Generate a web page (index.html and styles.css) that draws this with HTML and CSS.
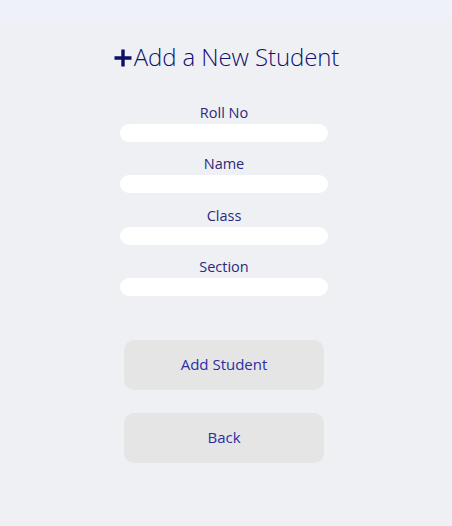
FILE: index.html
```html
<!DOCTYPE html>
<html lang="en">
<head>
<meta charset="utf-8">
<title>Add a New Student</title>
<link rel="stylesheet" href="styles.css">
</head>
<body>
<header class="topbar"></header>
<main class="page">
  <h1 class="title">
    <svg class="plus" width="18" height="18" viewBox="0 0 18 18" aria-hidden="true">
      <path d="M9 0.5V17.5M0.5 9H17.5" stroke="#0d0d66" stroke-width="3.4" fill="none"/>
    </svg>
    <span>Add a New Student</span>
  </h1>
  <form class="form">
    <div class="field">
      <label class="label" for="roll">Roll No</label>
      <input class="input" id="roll" type="text">
    </div>
    <div class="field">
      <label class="label" for="name">Name</label>
      <input class="input" id="name" type="text">
    </div>
    <div class="field">
      <label class="label" for="cls">Class</label>
      <input class="input" id="cls" type="text">
    </div>
    <div class="field">
      <label class="label" for="sec">Section</label>
      <input class="input" id="sec" type="text">
    </div>
    <div class="actions">
      <button class="btn" type="button">Add Student</button>
      <button class="btn" type="button">Back</button>
    </div>
  </form>
</main>
</body>
</html>
```
FILE: styles.css
```css
html, body {
  margin: 0;
  padding: 0;
}
body {
  background: #eff0f4;
  font-family: "Open Sans", "Noto Sans", "Liberation Sans", sans-serif;
  width: 452px;
  height: 526px;
  overflow: hidden;
}
.topbar {
  height: 23px;
  background: #eef2f8;
}
.page {
  display: flex;
  flex-direction: column;
  align-items: center;
  padding-right: 4px;
}
.title {
  margin: 19px 0 0;
  padding-left: 5px;
  height: 30px;
  display: flex;
  align-items: center;
  gap: 2px;
  font-size: 24px;
  font-weight: 300;
  color: #111170;
  line-height: 30px;
  letter-spacing: -0.1px;
}
.plus {
  display: block;
  margin-top: 1px;
}
.form {
  margin-top: 31px;
  display: flex;
  flex-direction: column;
  align-items: center;
}
.field {
  display: flex;
  flex-direction: column;
  align-items: center;
  margin-bottom: 12.33px;
}
.label {
  display: block;
  font-size: 14.5px;
  line-height: 19px;
  color: #2a2a7c;
  margin-bottom: 2px;
}
.input {
  width: 208px;
  height: 18px;
  box-sizing: border-box;
  border: none;
  border-radius: 9px;
  background: #ffffff;
  padding: 0 9px;
  outline: none;
}
.actions {
  margin-top: 31.5px;
  display: flex;
  flex-direction: column;
  gap: 23px;
}
.btn {
  width: 200px;
  height: 50px;
  border: none;
  border-radius: 10px;
  background: #e5e5e5;
  color: #2d2da4;
  font-family: "Open Sans", "Noto Sans", "Liberation Sans", sans-serif;
  font-size: 15px;
  padding: 0 0 2px;
}
```
